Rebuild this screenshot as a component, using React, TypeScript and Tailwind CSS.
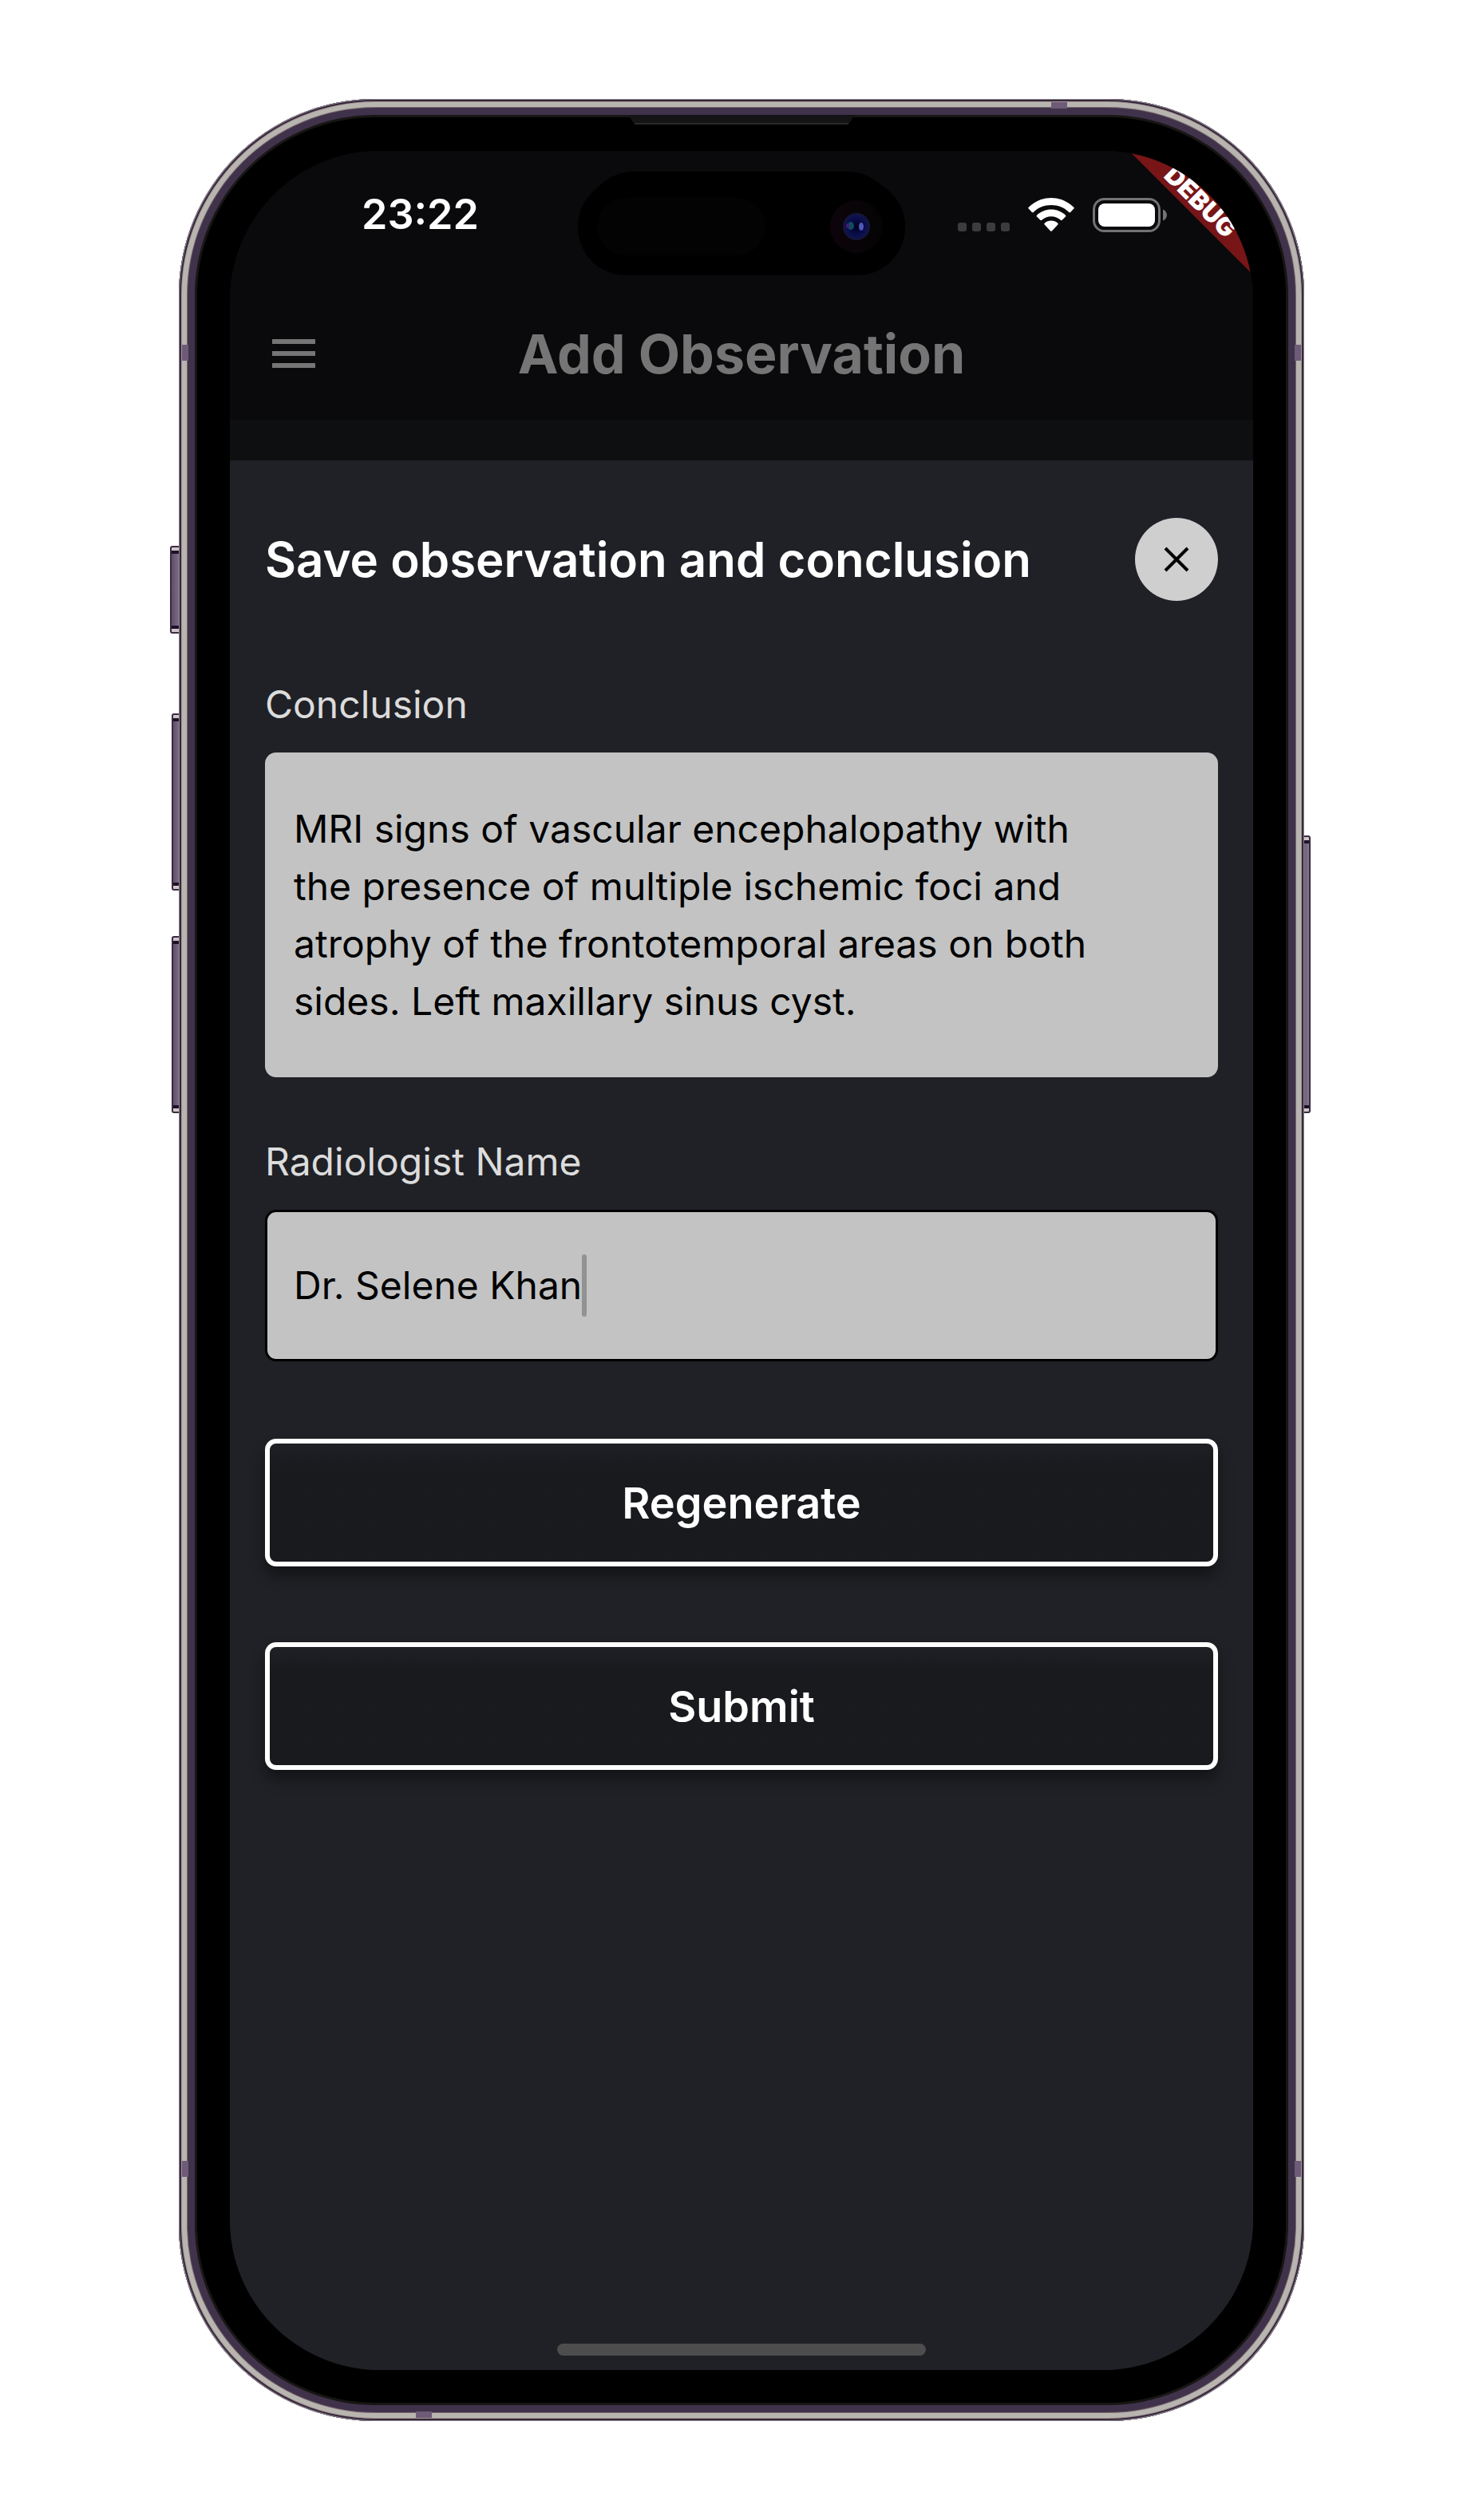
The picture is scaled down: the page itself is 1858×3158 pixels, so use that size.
import { useState } from "react";

function StatusBar() {
  return (
    <div className="flex h-[160px] items-center justify-between pl-[165px] pr-[107px]">
      <span className="text-[52px] font-semibold text-white">23:22</span>
      <div className="flex items-center gap-[23px]">
        <svg className="h-[43px] w-[65px]" viewBox="0 0 65 43" fill="#3c3c3e" aria-label="No signal">
          <rect x="0" y="31" width="11" height="11" rx="3" />
          <rect x="18" y="31" width="11" height="11" rx="3" />
          <rect x="36" y="31" width="11" height="11" rx="3" />
          <rect x="54" y="31" width="11" height="11" rx="3" />
        </svg>
        <svg className="h-[43px] w-[58px]" viewBox="0 0 58 43" fill="#fff" aria-label="Wi-Fi">
          <path d="M29 0C18 0 8 4.500 .7 11.800c-.6.600-.6 1.200 0 1.800l4.200 4.300c.6.600 1.200.600 1.800 0C12.500 12.200 20.300 9 29 9s16.500 3.200 22.300 8.900c.6.600 1.200.600 1.800 0l4.200-4.300c.6-.6.6-1.200 0-1.800C50 4.500 40 0 29 0Z" />
          <path d="M29 14.500c-7 0-13.300 2.700-18 7.200-.6.600-.6 1.200 0 1.800l4.300 4.300c.6.600 1.200.6 1.800 0C20.200 24.900 24.400 23.200 29 23.200s8.800 1.700 11.900 4.600c.6.600 1.200.6 1.800 0l4.300-4.300c.6-.6.6-1.200 0-1.800-4.700-4.500-11-7.200-18-7.200Z" />
          <path d="M29 28.600c-3.200 0-6.100 1.200-8.300 3.100-.6.600-.6 1.200 0 1.800l7.400 7.900c.6.600 1.200.6 1.800 0l7.400-7.900c.6-.6.6-1.200 0-1.800-2.200-1.900-5.100-3.100-8.300-3.100Z" />
        </svg>
        <svg className="h-[43px] w-[94px]" viewBox="0 0 94 43" aria-label="Battery full">
          <rect x="1.500" y="1.500" width="82" height="40" rx="13" fill="none" stroke="#737375" strokeWidth="3" />
          <rect x="7" y="7" width="71" height="29" rx="8" fill="#fff" />
          <path d="M88 14.500c3 1 5 3.800 5 7s-2 6-5 7Z" fill="#737375" />
        </svg>
      </div>
    </div>
  );
}

function DynamicIsland() {
  return (
    <svg className="absolute left-1/2 top-[26px] h-[130px] w-[410px] -translate-x-1/2" viewBox="0 0 410 130" aria-hidden="true">
      <defs>
        <radialGradient id="lens">
          <stop offset="0" stopColor="#02021c" />
          <stop offset=".65" stopColor="#0a0e50" />
          <stop offset="1" stopColor="#15183a" />
        </radialGradient>
        <linearGradient id="lensRing">
          <stop offset="0" stopColor="#0d040b" />
          <stop offset="1" stopColor="#040404" />
        </linearGradient>
      </defs>
      <rect x="9" y="0" width="390" height="122" rx="61" fill="#000" />
      <rect x="0" y="9" width="410" height="121" rx="60" fill="#000" />
      <rect x="24" y="33" width="211" height="72" rx="36" fill="#030303" />
      <circle cx="349" cy="69" r="33" fill="url(#lensRing)" />
      <circle cx="349" cy="69" r="17" fill="url(#lens)" />
      <ellipse cx="342" cy="68" rx="4" ry="5" fill="#124a60" />
      <ellipse cx="338" cy="68" rx="2" ry="3" fill="#4a1a78" />
      <ellipse cx="355" cy="69" rx="3" ry="5" fill="#5058b8" />
    </svg>
  );
}

function SpeakerSlot() {
  return (
    <svg className="absolute left-1/2 top-[20px] h-[13px] w-[284px] -translate-x-1/2" viewBox="0 0 284 13" aria-hidden="true">
      <path d="M0 0h284l-6 9q-2 3-5 3H11q-3 0-5-3Z" fill="#141315" />
      <path d="M8 11h268" stroke="#2a2a2a" strokeWidth="2" />
    </svg>
  );
}

function SideButton({ place }: { place: string }) {
  return (
    <div className={`absolute rounded-[3px] border-2 border-[#3a2c41] bg-[#cfc5c8] py-1 ${place}`}>
      <div className="h-full border-y-4 border-[#1c1228] bg-linear-to-r from-[#5f5068] to-[#86768f]" />
    </div>
  );
}

const BANDS = [
  "left-[4px] top-[308px] h-[20px] w-[8px]",
  "right-[4px] top-[308px] h-[20px] w-[8px]",
  "left-[4px] bottom-[306px] h-[20px] w-[8px]",
  "right-[4px] bottom-[306px] h-[20px] w-[8px]",
  "right-[297px] top-[4px] h-[8px] w-[20px]",
  "left-[297px] bottom-[4px] h-[8px] w-[20px]",
];

function ActionButton({ children }: { children: string }) {
  return (
    <button
      type="button"
      className="h-[160px] w-full rounded-[14px] border-[6px] border-white bg-[#191a1e] bg-linear-to-b from-[#1f2025] to-[#191a1e] to-20% text-[54px] font-semibold text-white shadow-[0_12px_18px_#00000066]"
    >
      {children}
    </button>
  );
}

export default function App() {
  const [conclusion, setConclusion] = useState(
    [
      "MRI signs of vascular encephalopathy with",
      "the presence of multiple ischemic foci and",
      "atrophy of the frontotemporal areas on both",
      "sides. Left maxillary sinus cyst.",
    ].join("\n")
  );
  const [name, setName] = useState("Dr. Selene Khan");

  return (
    <main className="flex min-h-screen justify-center bg-white py-[124px] font-['Inter',sans-serif]">
      <div className="relative flex aspect-[1410/2910] w-full max-w-[1410px] self-start">
        <SideButton place="-left-[11px] top-[560px] h-[110px] w-[16px]" />
        <SideButton place="-left-[9px] top-[770px] h-[222px] w-[14px]" />
        <SideButton place="-left-[9px] top-[1049px] h-[222px] w-[14px]" />
        <SideButton place="-right-[8px] top-[923px] h-[348px] w-[14px]" />

        <div className="relative flex w-full rounded-[246px] bg-black px-[64px] pb-[64px] pt-[65px] shadow-[inset_0_0_0_1px_#8c8591,inset_0_0_0_3px_#34273b,inset_0_0_0_4px_#a2938f,inset_0_0_0_10px_#b8b5b1,inset_0_0_0_11px_#7d6c70,inset_0_0_0_20px_#40324a,inset_0_0_0_23px_#171614]">
          <SpeakerSlot />
          {BANDS.map((band) => (
            <div key={band} className={`absolute bg-[#6d5b78] ${band}`} />
          ))}

          <div className="relative flex w-full flex-col overflow-hidden rounded-[188px] bg-[#0e0f11]">
            <header className="bg-[#0a0a0c]">
              <StatusBar />
              <div className="grid h-[177px] grid-cols-[72px_1fr_72px] items-center px-[44px] pt-[10px]">
                <button type="button" aria-label="Open menu" className="size-[72px]">
                  <svg viewBox="0 0 24 24" fill="#757575">
                    <path d="M3 18h18v-2H3v2zm0-5h18v-2H3v2zm0-7v2h18V6H3z" />
                  </svg>
                </button>
                <h1 className="text-center text-[68px] font-bold text-[#757575]">Add Observation</h1>
              </div>
            </header>
            <DynamicIsland />

            <section className="mt-[51px] flex flex-1 flex-col bg-[#202126] px-[44px] pt-[72px]">
              <div className="flex items-center justify-between">
                <h2 className="text-[60px] leading-[72px] font-semibold text-white">Save observation and conclusion</h2>
                <button
                  type="button"
                  aria-label="Close"
                  className="flex size-[104px] shrink-0 items-center justify-center rounded-full bg-[#cfcfcf]"
                >
                  <svg className="size-[32px]" viewBox="0 0 32 32" stroke="#000" strokeWidth="4">
                    <path d="M2 2l28 28M30 2L2 30" />
                  </svg>
                </button>
              </div>

              <label htmlFor="conclusion" className="mt-[94px] text-[48px] leading-[72px] text-[#dcdcdc]">
                Conclusion
              </label>
              <textarea
                id="conclusion"
                rows={4}
                value={conclusion}
                onChange={(e) => setConclusion(e.target.value)}
                className="mt-[24px] block h-[407px] w-full resize-none rounded-[14px] bg-[#c3c3c3] px-[36px] py-[60px] text-[48px] leading-[72px] text-black outline-none"
              />

              <label htmlFor="radiologist" className="mt-[70px] text-[48px] leading-[72px] text-[#dcdcdc]">
                Radiologist Name
              </label>
              <div className="mt-[24px] flex h-[190px] items-center rounded-[14px] border-[3px] border-black bg-[#c3c3c3] px-[33px]">
                <input
                  id="radiologist"
                  type="text"
                  value={name}
                  onChange={(e) => setName(e.target.value)}
                  className="field-sizing-content max-w-full bg-transparent text-[48px] leading-[72px] text-black caret-transparent outline-none"
                />
                <span className="h-[78px] w-[6px] rounded-full bg-[#929292]" />
              </div>

              <div className="mt-[97px] flex flex-col gap-[95px]">
                <ActionButton>Regenerate</ActionButton>
                <ActionButton>Submit</ActionButton>
              </div>

              <div className="mb-[18px] mt-auto h-[15px] w-[462px] self-center rounded-full bg-[#4d4d4d]" />
            </section>

            <div className="absolute right-[-54px] top-[46px] flex h-[36px] w-[240px] rotate-45 items-center justify-center bg-[#781517] text-[32px] font-black text-white">
              DEBUG
            </div>
          </div>
        </div>
      </div>
    </main>
  );
}
